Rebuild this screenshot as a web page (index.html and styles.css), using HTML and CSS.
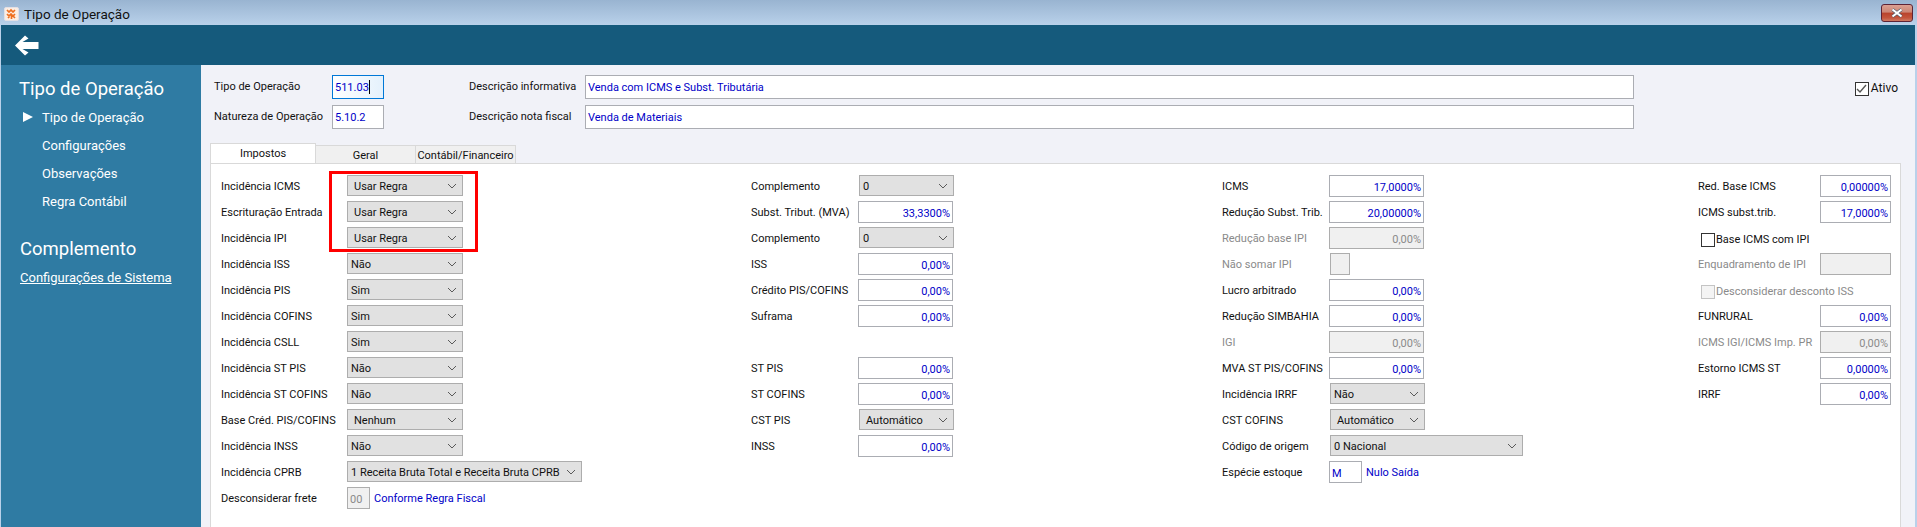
FILE: index.html

```html
<!DOCTYPE html>
<html lang="pt-BR">
<head>
  <meta charset="UTF-8" />
  <title>Tipo de Operação</title>
  <link rel="stylesheet" href="styles.css">
</head>
<body>
  <svg class="defs" width="0" height="0">
    <symbol id="chev" viewBox="0 0 10 6"><path d="M1 1l4 4 4-4" fill="none" stroke="#5a5a5a" stroke-width="1"/></symbol>
  </svg>

  <div class="titlebar">
    <svg class="app-icon" width="15" height="14" viewBox="0 0 15 14">
      <rect x=".5" y=".5" width="14" height="13" rx="1.5" fill="#fbeee4" stroke="#e4e0e4"/>
      <path d="M3 3l2 2 2-2 2 2 2-2M3 7l2 2 2-2 2 2 2-2M4 11l1.500-1.500M7.500 8v4M11 11L9.500 9.500" fill="none" stroke="#ee6f1f" stroke-width="1.700"/>
    </svg>
    <span class="title-text">Tipo de Operação</span>
    <div class="close-btn">
      <svg width="14" height="10" viewBox="0 0 14 10"><path d="M2.500 1.500l9 7M11.500 1.500l-9 7" stroke="#4a5a6a" stroke-width="3.400"/><path d="M2.500 1.500l9 7M11.500 1.500l-9 7" stroke="#fff" stroke-width="2.200"/></svg>
    </div>
  </div>

  <div class="topbar">
    <svg width="24" height="21" viewBox="0 0 24 21"><path d="M0 10.500L10 .5l3.500 3L7.500 7h16v7h-16l6 3.500-3.500 3z" fill="#fff"/></svg>
  </div>

  <div class="main">
    <nav class="sidebar">
      <h2 class="side-title">Tipo de Operação</h2>
      <a class="side-item current">Tipo de Operação</a>
      <a class="side-item">Configurações</a>
      <a class="side-item">Observações</a>
      <a class="side-item">Regra Contábil</a>
      <h2 class="side-title second">Complemento</h2>
      <a class="side-link">Configurações de Sistema</a>
    </nav>

    <div class="content">
      <div class="head">
        <div class="head-fields">
          <label class="hl1">Tipo de Operação</label>
          <div class="inp focused left">511.03<i class="caret"></i></div>
          <label class="hl2">Descrição informativa</label>
          <div class="inp left">Venda com ICMS e Subst. Tributária</div>
          <label class="hl1">Natureza de Operação</label>
          <div class="inp left">5.10.2</div>
          <label class="hl2">Descrição nota fiscal</label>
          <div class="inp left">Venda de Materiais</div>
        </div>
        <div class="ativo"><span class="check on"><svg width="11" height="10" viewBox="0 0 11 10"><path d="M1 5l3 3 6-7" fill="none" stroke="#555" stroke-width="1.400"/></svg></span>Ativo</div>
      </div>

      <div class="tabs">
        <div class="tab active">Impostos</div>
        <div class="tab">Geral</div>
        <div class="tab">Contábil/Financeiro</div>
      </div>

      <div class="panel">
        <div class="red-box"></div>
        <div class="columns">

          <div class="col col1">
            <div class="row"><label>Incidência ICMS</label><div class="combo"><span class="pad">Usar Regra</span><svg><use href="#chev"/></svg></div></div>
            <div class="row"><label>Escrituração Entrada</label><div class="combo"><span class="pad">Usar Regra</span><svg><use href="#chev"/></svg></div></div>
            <div class="row"><label>Incidência IPI</label><div class="combo"><span class="pad">Usar Regra</span><svg><use href="#chev"/></svg></div></div>
            <div class="row"><label>Incidência ISS</label><div class="combo"><span>Não</span><svg><use href="#chev"/></svg></div></div>
            <div class="row"><label>Incidência PIS</label><div class="combo"><span>Sim</span><svg><use href="#chev"/></svg></div></div>
            <div class="row"><label>Incidência COFINS</label><div class="combo"><span>Sim</span><svg><use href="#chev"/></svg></div></div>
            <div class="row"><label>Incidência CSLL</label><div class="combo"><span>Sim</span><svg><use href="#chev"/></svg></div></div>
            <div class="row"><label>Incidência ST PIS</label><div class="combo"><span>Não</span><svg><use href="#chev"/></svg></div></div>
            <div class="row"><label>Incidência ST COFINS</label><div class="combo"><span>Não</span><svg><use href="#chev"/></svg></div></div>
            <div class="row"><label>Base Créd. PIS/COFINS</label><div class="combo"><span class="pad">Nenhum</span><svg><use href="#chev"/></svg></div></div>
            <div class="row"><label>Incidência INSS</label><div class="combo"><span>Não</span><svg><use href="#chev"/></svg></div></div>
            <div class="row"><label>Incidência CPRB</label><div class="combo wide"><span>1 Receita Bruta Total e Receita Bruta CPRB</span><svg><use href="#chev"/></svg></div></div>
            <div class="row"><label>Desconsiderar frete</label><div class="inp off left tiny">00</div><span class="note">Conforme Regra Fiscal</span></div>
          </div>

          <div class="col col2">
            <div class="row"><label>Complemento</label><div class="combo"><span>0</span><svg><use href="#chev"/></svg></div></div>
            <div class="row"><label>Subst. Tribut. (MVA)</label><div class="inp">33,3300%</div></div>
            <div class="row"><label>Complemento</label><div class="combo"><span>0</span><svg><use href="#chev"/></svg></div></div>
            <div class="row"><label>ISS</label><div class="inp">0,00%</div></div>
            <div class="row"><label>Crédito PIS/COFINS</label><div class="inp">0,00%</div></div>
            <div class="row"><label>Suframa</label><div class="inp">0,00%</div></div>
            <div class="row"></div>
            <div class="row"><label>ST PIS</label><div class="inp">0,00%</div></div>
            <div class="row"><label>ST COFINS</label><div class="inp">0,00%</div></div>
            <div class="row"><label>CST PIS</label><div class="combo"><span class="pad">Automático</span><svg><use href="#chev"/></svg></div></div>
            <div class="row"><label>INSS</label><div class="inp">0,00%</div></div>
          </div>

          <div class="col col3">
            <div class="row"><label>ICMS</label><div class="inp">17,0000%</div></div>
            <div class="row"><label>Redução Subst. Trib.</label><div class="inp">20,00000%</div></div>
            <div class="row dim"><label>Redução base IPI</label><div class="inp off">0,00%</div></div>
            <div class="row dim"><label>Não somar IPI</label><div class="inp off box"></div></div>
            <div class="row"><label>Lucro arbitrado</label><div class="inp">0,00%</div></div>
            <div class="row"><label>Redução SIMBAHIA</label><div class="inp">0,00%</div></div>
            <div class="row dim"><label>IGI</label><div class="inp off">0,00%</div></div>
            <div class="row"><label>MVA ST PIS/COFINS</label><div class="inp">0,00%</div></div>
            <div class="row"><label>Incidência IRRF</label><div class="combo"><span>Não</span><svg><use href="#chev"/></svg></div></div>
            <div class="row"><label>CST COFINS</label><div class="combo"><span class="pad">Automático</span><svg><use href="#chev"/></svg></div></div>
            <div class="row"><label>Código de origem</label><div class="combo origem"><span>0 Nacional</span><svg><use href="#chev"/></svg></div></div>
            <div class="row"><label>Espécie estoque</label><div class="inp left mini">M</div><span class="note">Nulo Saída</span></div>
          </div>

          <div class="col col4">
            <div class="row"><label>Red. Base ICMS</label><div class="inp">0,00000%</div></div>
            <div class="row"><label>ICMS subst.trib.</label><div class="inp">17,0000%</div></div>
            <div class="row chk-row"><span class="check"></span>Base ICMS com IPI</div>
            <div class="row dim"><label>Enquadramento de IPI</label><div class="inp off"></div></div>
            <div class="row chk-row dim"><span class="check off"></span>Desconsiderar desconto ISS</div>
            <div class="row"><label>FUNRURAL</label><div class="inp">0,00%</div></div>
            <div class="row dim"><label>ICMS IGI/ICMS Imp. PR</label><div class="inp off">0,00%</div></div>
            <div class="row"><label>Estorno ICMS ST</label><div class="inp">0,0000%</div></div>
            <div class="row"><label>IRRF</label><div class="inp">0,00%</div></div>
          </div>

        </div>
      </div>
    </div>
  </div>
</body>
</html>
```

FILE: styles.css

```css
html, body { margin: 0; height: 100%; overflow: hidden; }
body { font-family: Roboto, "Noto Sans", sans-serif; font-size: 11px; color: #111; background: #b9d1ea; display: flex; flex-direction: column; }
.defs { position: absolute; }

.titlebar { height: 25px; display: flex; align-items: center; padding-left: 4px; background: linear-gradient(#99b4d1, #b9d1ea); }
.app-icon { margin-right: 5px; margin-top: 2px; }
.title-text { font-size: 13.500px; color: #111; margin-top: 2px; }
.close-btn { width: 32px; height: 18px; margin: 0 4px 0 auto; align-self: flex-start; margin-top: 4px; display: flex; align-items: center; justify-content: center; box-sizing: border-box; border: 1px solid #5e2436; border-radius: 3px; background: linear-gradient(#dca092 0, #cc8675 45%, #b9432c 50%, #c4553c 80%, #d07a64 100%); }

.topbar { height: 40px; margin: 0 2px 0 1px; background: #155a7c; display: flex; align-items: center; padding-left: 14px; }

.main { flex: 1; display: flex; margin: 0 2px 0 1px; min-height: 0; }
.sidebar { width: 200px; background: #2f7ba3; color: #fff; padding: 12px 0 0 18px; box-sizing: border-box; }
.side-title { margin: 0; font-size: 18.500px; line-height: 24px; font-weight: 400; }
.side-title.second { margin: 21px 0 0 1px; }
.side-item { display: block; font-size: 13px; line-height: 28px; padding-left: 23px; position: relative; }
.side-item.current::before { content: ""; position: absolute; left: 4px; top: 8px; border-left: 10px solid #fff; border-top: 5px solid transparent; border-bottom: 5px solid transparent; }
.side-title + .side-item { margin-top: 3px; }
.side-link { display: block; margin: 7px 0 0 1px; font-size: 13px; line-height: 20px; text-decoration: underline; }

.content { flex: 1; background: #f1f2f8; padding: 10px 14px 0 9px; min-width: 0; display: flex; flex-direction: column; }

.head { display: flex; padding-left: 4px; }
.head-fields { display: grid; grid-template-columns: 118px 52px 85px 116px 1049px; grid-auto-rows: 24px; row-gap: 6px; align-items: center; }
.hl2 { grid-column: 4; }
.hl1 { grid-column: 1; }
.head-fields label { margin-top: -1px; }
.head-fields .inp { width: auto; height: 24px; line-height: 24px; }
.ativo { margin-left: auto; margin-right: 3px; margin-top: 7px; display: flex; align-items: flex-start; font-size: 12px; height: 14px; line-height: 13px; }
.ativo .check { margin-right: 2px; }

.inp { width: 95px; height: 22px; box-sizing: border-box; background: #fff; border: 1px solid #abadb3; color: #0000c8; text-align: right; padding: 0 2px; line-height: 23px; flex: none; }
.inp.left { text-align: left; padding-left: 2px; }
.inp.focused { border-color: #0078d7; background: linear-gradient(90deg, #fff, #e4f1fc); }
.caret { display: inline-block; width: 1px; height: 14px; background: #000; vertical-align: -3px; }
.inp.off { background: #f0f0f0; border-color: #adadad; color: #8a8a8a; }
.inp.tiny { width: 23px; }
.inp.mini { width: 33px; }
.inp.box { width: 20px; margin-left: 1px; }
.col4 .inp { width: 71px; }

.tabs { display: flex; align-items: flex-end; margin-top: 14px; height: 20px; }
.tab { width: 100px; height: 18px; box-sizing: border-box; background: #f0f0f0; border: 1px solid #d9d9d9; border-bottom: 0; border-left: 0; text-align: center; line-height: 19px; }
.tab.active { width: 106px; height: 20px; background: #fff; border-left: 1px solid #d9d9d9; line-height: 19px; }

.panel { flex: 1; position: relative; background: #fff; border: 1px solid #d9d9d9; border-bottom: 0; padding: 11px 0 0 10px; }
.red-box { position: absolute; left: 118px; top: 7px; width: 149px; height: 81px; box-sizing: border-box; border: 3px solid #f00; }

.columns { display: grid; grid-template-columns: 530px 471px 476px 1fr; }
.row { height: 26px; display: flex; align-items: flex-start; line-height: 24px; white-space: nowrap; }
.row label { flex: none; }
.col1 label { width: 126px; }
.col2 label, .col3 label { width: 107px; }
.col4 label { width: 122px; }
.dim { color: #8a8a8a; }

.combo { width: 116px; height: 21px; box-sizing: border-box; background: #e1e1e1; border: 1px solid #adadad; padding-left: 3px; display: flex; align-items: center; justify-content: space-between; line-height: 19px; flex: none; }
.combo span { margin-top: 2px; }
.combo svg { width: 10px; height: 6px; margin-right: 5px; flex: none; }
.combo .pad { padding-left: 3px; }
.col2 .combo, .col3 .combo { width: 95px; margin-left: 1px; }
.combo.wide { width: 235px; }
.col3 .combo.origem { width: 193px; }

.note { color: #0000c8; margin-left: 4px; }

.check { width: 12px; height: 12px; border: 1px solid #333; background: #fff; display: inline-flex; align-items: center; justify-content: center; flex: none; }
.check.off { border-color: #c4c4c4; background: #f4f4f4; }
.chk-row { padding-left: 3px; align-items: center; height: 26px; }
.chk-row .check { margin-right: 1px; }
```
